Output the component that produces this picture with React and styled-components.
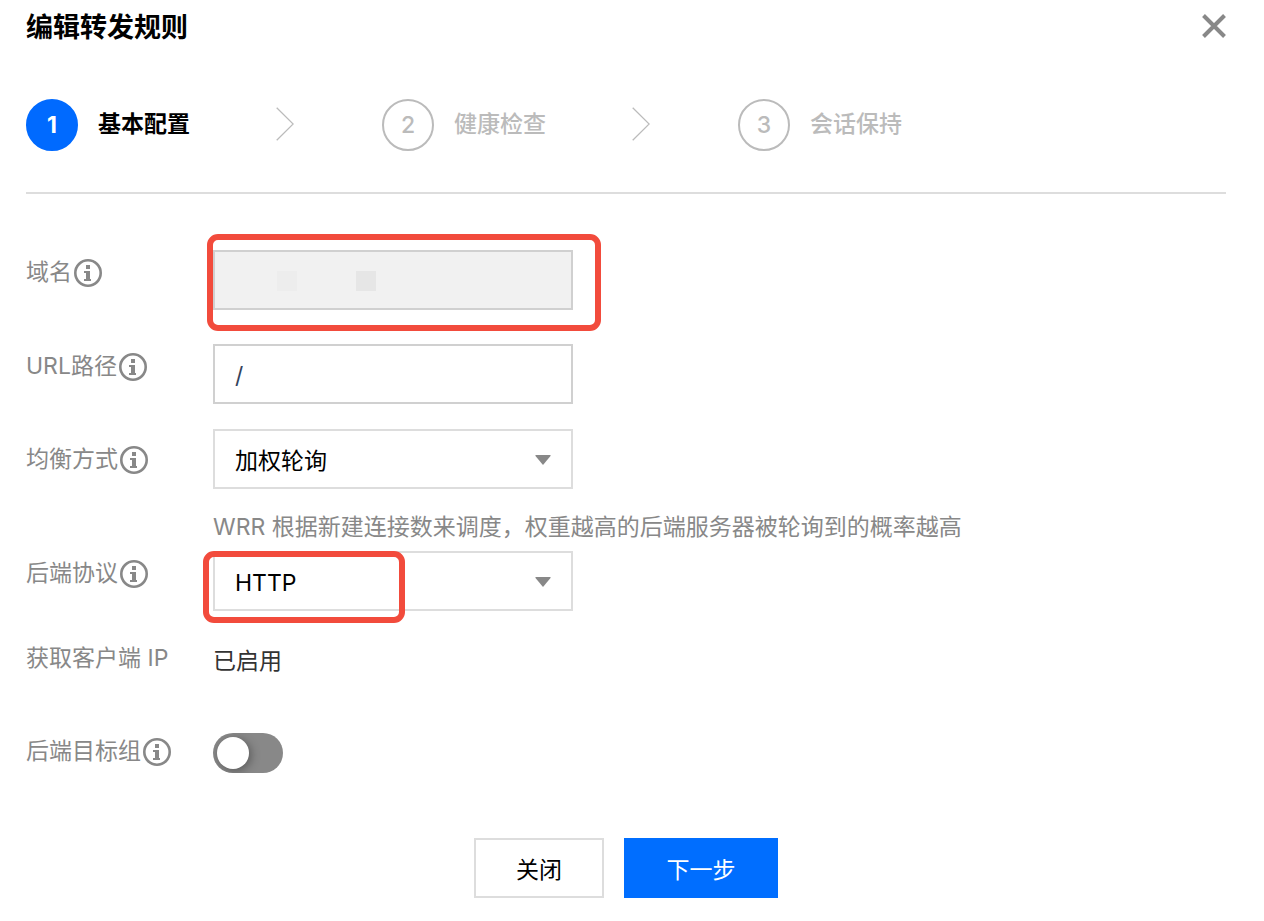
import React from "react";
import styled, { createGlobalStyle } from "styled-components";

const GlobalStyle = createGlobalStyle`
  *, *::before, *::after { box-sizing: border-box; }
  body {
    margin: 0;
    background: #fff;
    color: #000;
    font-family: Inter, "Noto Sans CJK SC", sans-serif;
    font-size: 23px;
  }
  button, input, select { font: inherit; }
`;

const Dialog = styled.main`
  padding: 0 38px 23px 26px;
`;

const Header = styled.header`
  display: flex;
  align-items: center;
  justify-content: space-between;
  height: 52px;
`;

const Title = styled.h1`
  margin: 0;
  padding-top: 4px;
  font-size: 27px;
  line-height: 48px;
  font-weight: 700;
`;

const CloseIconButton = styled.button`
  display: flex;
  padding: 0;
  border: 0;
  background: none;
  cursor: pointer;
`;

const Steps = styled.ol`
  display: flex;
  margin: 0;
  padding: 47px 0 41px;
  border-bottom: 2px solid #ddd;
  list-style: none;
`;

const Step = styled.li`
  display: flex;
  align-items: center;
  color: ${(p) => (p.$active ? "#000" : "#bbb")};
  font-weight: ${(p) => (p.$active ? 700 : 500)};
`;

const StepNumber = styled.span`
  display: flex;
  align-items: center;
  justify-content: center;
  width: 52px;
  height: 52px;
  border: 2px solid ${(p) => (p.$active ? "#006aff" : "#bbb")};
  border-radius: 50%;
  background: ${(p) => (p.$active ? "#006aff" : "#fff")};
  color: ${(p) => (p.$active ? "#fff" : "#bbb")};
`;

const StepLabel = styled.span`
  width: 198px;
  padding: 0 0 2px 20px;
  line-height: 50px;
`;

const StepArrow = styled.svg`
  margin: 0 88px 2px 0;
`;

const Form = styled.form`
  padding-top: 56px;
`;

const Row = styled.div`
  display: grid;
  grid-template-columns: 187px 1fr;
  align-items: start;
  margin-bottom: ${(p) => p.$gap}px;
`;

const LabelCell = styled.div`
  display: flex;
  align-items: center;
  gap: 2px;
  height: ${(p) => (p.$tall ? 56 : 40)}px;
  color: #888;
  white-space: nowrap;

  svg { margin-top: 6px; }
`;

const Field = styled.div`
  position: relative;
  width: 360px;
`;

const TextInput = styled.input`
  display: block;
  width: 100%;
  height: 60px;
  padding: 4px 20px 0;
  border: 2px solid #d0d0d0;
  border-radius: 0;
  background: #fff;
  color: #34435c;

  &:disabled { background: #f1f1f1; }
`;

const Select = styled.select`
  display: block;
  width: 100%;
  height: 60px;
  padding: 4px 48px 0 20px;
  border: 2px solid #ddd;
  border-radius: 0;
  background: #fff;
  color: #000;
  appearance: none;
`;

const Caret = styled.svg`
  position: absolute;
  top: 26px;
  right: 22px;
  pointer-events: none;
`;

const Mask = styled.span`
  position: absolute;
  top: 21px;
  left: ${(p) => p.$left}px;
  width: 20px;
  height: 20px;
  background: ${(p) => p.$tone};
`;

const Highlight = styled.span`
  position: absolute;
  top: ${(p) => p.$top}px;
  left: ${(p) => p.$left}px;
  width: ${(p) => p.$width}px;
  height: ${(p) => p.$height}px;
  border: 6px solid #f24b3c;
  border-radius: 11px;
  pointer-events: none;
`;

const Hint = styled.p`
  margin: 14px 0 0;
  color: #888;
  line-height: 48px;
`;

const Value = styled.span`
  color: #333;
  line-height: 50px;
`;

const Toggle = styled.input`
  display: block;
  width: 70px;
  height: 40px;
  margin: 4px 0;
  padding: 4px;
  overflow: hidden;
  border-radius: 20px;
  background: #888;
  appearance: none;
  cursor: pointer;

  &::before {
    content: "";
    display: block;
    width: 32px;
    height: 32px;
    border-radius: 50%;
    background: #fff;
    box-shadow: 2px 2px 10px rgba(0, 0, 0, 0.35);
  }

  &:checked { background: #006eff; }
  &:checked::before { margin-left: 30px; }
`;

const Footer = styled.footer`
  display: flex;
  justify-content: center;
  gap: 20px;
  padding-top: 61px;
`;

const Button = styled.button`
  min-width: ${(p) => (p.$primary ? 154 : 130)}px;
  height: 60px;
  padding: 0 40px;
  border: 2px solid ${(p) => (p.$primary ? "#006eff" : "#ddd")};
  background: ${(p) => (p.$primary ? "#006eff" : "#fff")};
  color: ${(p) => (p.$primary ? "#fff" : "#000")};
  cursor: pointer;
`;

const InfoIcon = () => (
  <svg width="28" height="28" viewBox="0 0 28 28" aria-hidden="true">
    <circle cx="14" cy="14" r="12.7" fill="none" stroke="#888" strokeWidth="2.6" />
    <path d="M12 6h4v4h-4zM10 12h6v8h1v2h-7v-2h2v-6h-2z" fill="#888" />
  </svg>
);

const Arrow = () => (
  <StepArrow width="18" height="34" viewBox="0 0 18 34" aria-hidden="true">
    <path d="M.7.7 17.2 17 .7 33.3" fill="none" stroke="#bbb" strokeWidth="1.3" />
  </StepArrow>
);

const DropCaret = () => (
  <Caret width="16" height="10" viewBox="0 0 16 10" aria-hidden="true">
    <path d="M1 0h14q1.2 0 .5 1L8 10 .5 1Q-.2 0 1 0z" fill="#888" />
  </Caret>
);

const steps = ["基本配置", "健康检查", "会话保持"];

function FormRow({ label, htmlFor, info, tall, gap = 0, children }) {
  return (
    <Row $gap={gap}>
      <LabelCell $tall={tall}>
        {htmlFor ? <label htmlFor={htmlFor}>{label}</label> : <span>{label}</span>}
        {info && <InfoIcon />}
      </LabelCell>
      {children}
    </Row>
  );
}

export default function App() {
  return (
    <>
      <GlobalStyle />
      <Dialog>
        <Header>
          <Title>编辑转发规则</Title>
          <CloseIconButton type="button" aria-label="关闭">
            <svg width="24" height="24" viewBox="0 0 24 24" aria-hidden="true">
              <path d="M1.5 1.5l21 21M22.5 1.5l-21 21" stroke="#888" strokeWidth="4" />
            </svg>
          </CloseIconButton>
        </Header>
        <Steps>
          {steps.map((name, i) => (
            <Step key={name} $active={i === 0}>
              <StepNumber $active={i === 0}>{i + 1}</StepNumber>
              <StepLabel>{name}</StepLabel>
              {i < steps.length - 1 && <Arrow />}
            </Step>
          ))}
        </Steps>
        <Form onSubmit={(e) => e.preventDefault()}>
          <FormRow label="域名" htmlFor="domain" info gap={34}>
            <Field>
              <TextInput id="domain" disabled />
              <Mask $left={64} $tone="#ededed" />
              <Mask $left={143} $tone="#e6e6e6" />
              <Highlight $top={-16} $left={-6} $width={394} $height={97} />
            </Field>
          </FormRow>
          <FormRow label="URL路径" htmlFor="path" info gap={25}>
            <Field>
              <TextInput id="path" defaultValue="/" />
            </Field>
          </FormRow>
          <FormRow label="均衡方式" htmlFor="balance" info tall>
            <div>
              <Field>
                <Select id="balance">
                  <option>加权轮询</option>
                </Select>
                <DropCaret />
              </Field>
              <Hint>WRR 根据新建连接数来调度，权重越高的后端服务器被轮询到的概率越高</Hint>
            </div>
          </FormRow>
          <FormRow label="后端协议" htmlFor="protocol" info gap={25}>
            <Field>
              <Select id="protocol">
                <option>HTTP</option>
              </Select>
              <DropCaret />
              <Highlight $top={0} $left={-10} $width={202} $height={72} />
            </Field>
          </FormRow>
          <FormRow label="获取客户端 IP" gap={43}>
            <Value>已启用</Value>
          </FormRow>
          <FormRow label="后端目标组" htmlFor="group" info>
            <Toggle id="group" type="checkbox" role="switch" />
          </FormRow>
          <Footer>
            <Button type="button">关闭</Button>
            <Button type="submit" $primary>下一步</Button>
          </Footer>
        </Form>
      </Dialog>
    </>
  );
}
